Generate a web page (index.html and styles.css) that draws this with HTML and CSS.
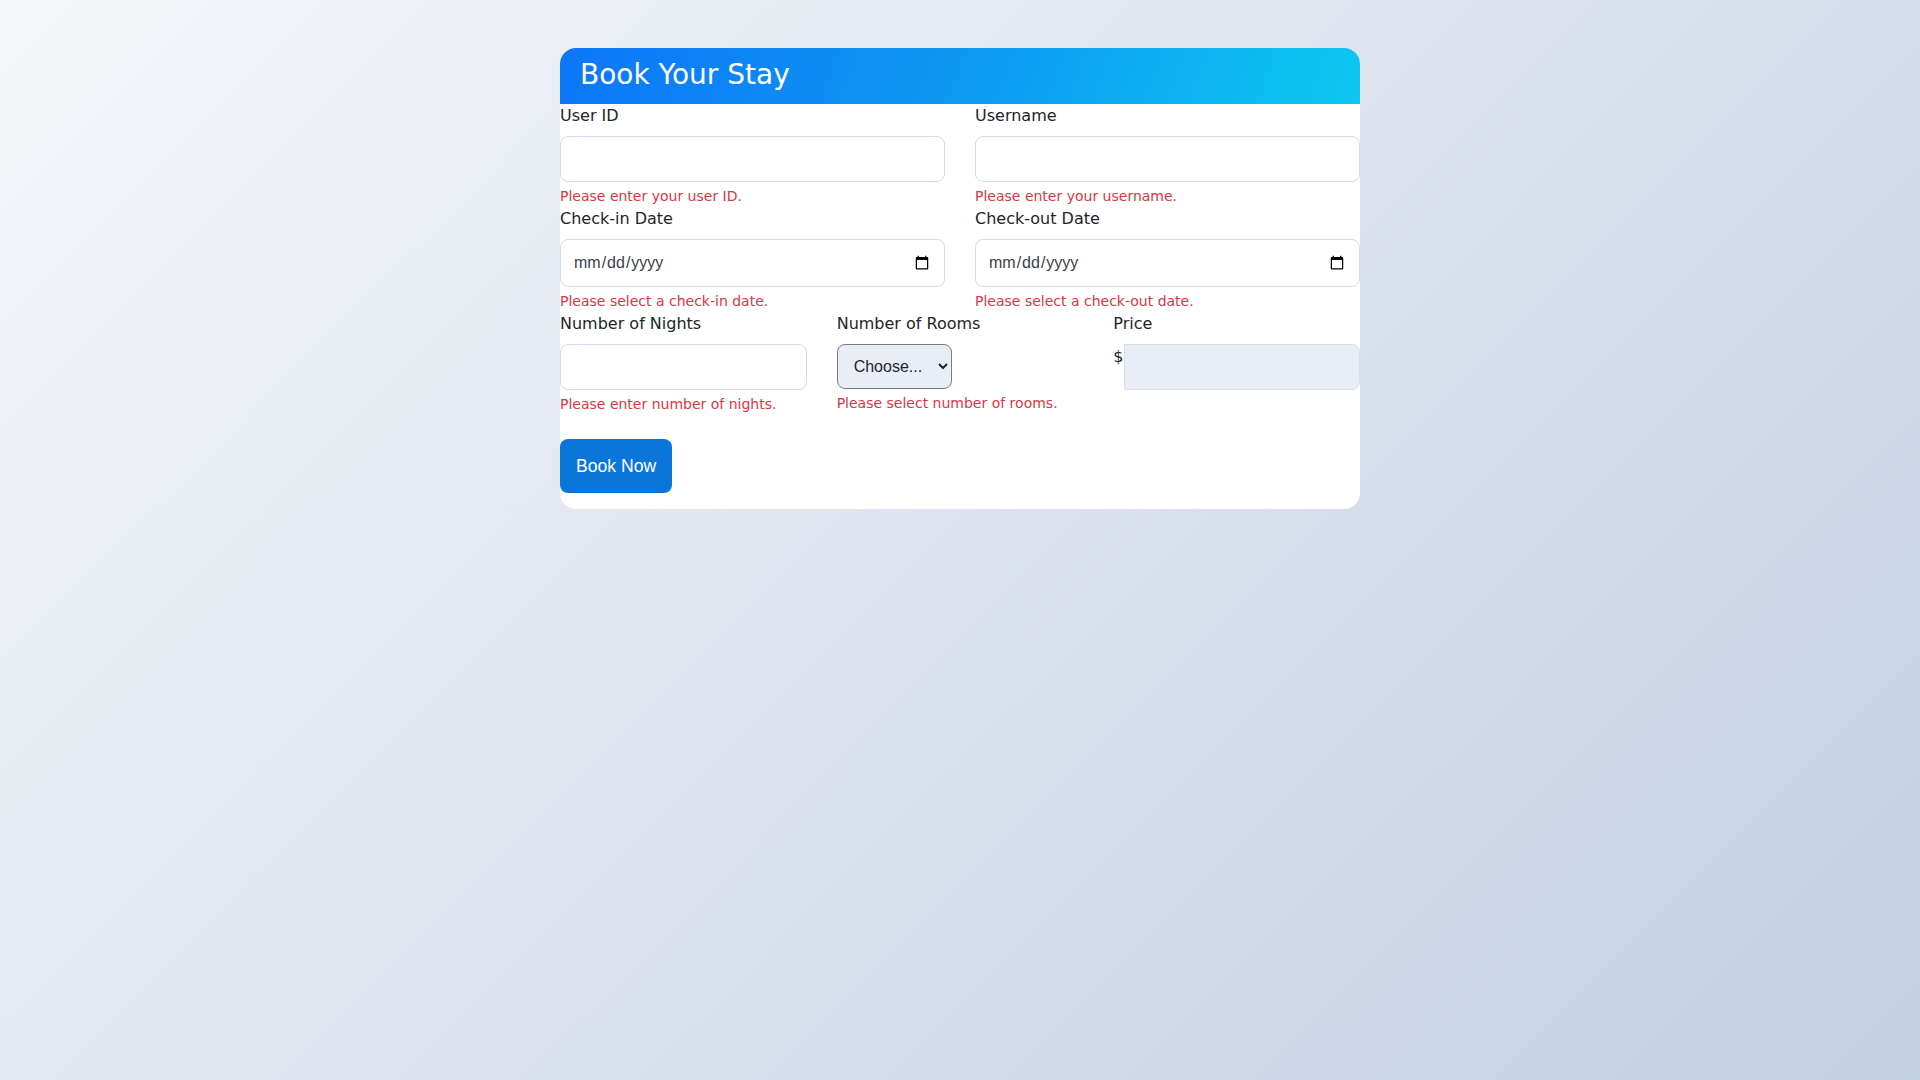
FILE: index.html
```html
<!DOCTYPE html>
<html lang="en">
<head>
<meta charset="utf-8">
<title>Book Your Stay</title>
<link rel="stylesheet" href="styles.css">
</head>
<body>
<main class="page">
  <section class="card">
    <header class="card-header">
      <h1 class="title">Book Your Stay</h1>
    </header>
    <form class="card-body">
      <div class="row two">
        <div class="field">
          <label class="form-label">User ID</label>
          <input class="form-control" type="text">
          <div class="invalid">Please enter your user ID.</div>
        </div>
        <div class="field">
          <label class="form-label">Username</label>
          <input class="form-control" type="text">
          <div class="invalid">Please enter your username.</div>
        </div>
      </div>
      <div class="row two">
        <div class="field">
          <label class="form-label">Check-in Date</label>
          <input class="form-control date" type="date">
          <div class="invalid">Please select a check-in date.</div>
        </div>
        <div class="field">
          <label class="form-label">Check-out Date</label>
          <input class="form-control date" type="date">
          <div class="invalid">Please select a check-out date.</div>
        </div>
      </div>
      <div class="row three">
        <div class="field">
          <label class="form-label">Number of Nights</label>
          <input class="form-control" type="text">
          <div class="invalid">Please enter number of nights.</div>
        </div>
        <div class="field">
          <label class="form-label">Number of Rooms</label>
          <div>
            <select class="form-select">
              <option>Choose...</option>
              <option>1</option>
              <option>2</option>
            </select>
          </div>
          <div class="invalid">Please select number of rooms.</div>
        </div>
        <div class="field">
          <label class="form-label">Price</label>
          <div class="input-group">
            <span class="currency">$</span>
            <input class="form-control price" type="text" readonly>
          </div>
        </div>
      </div>
      <div class="actions">
        <button class="btn" type="button">Book Now</button>
      </div>
    </form>
  </section>
</main>
</body>
</html>
```

FILE: styles.css
```css
html, body {
  margin: 0;
  padding: 0;
}
body {
  min-height: 100vh;
  background: linear-gradient(135deg, #f5f7fa 0%, #c3cfe2 100%);
  font-family: "DejaVu Sans", sans-serif;
  font-size: 16px;
  line-height: 1.5;
  color: #212529;
}
.page {
  padding-top: 48px;
}
.card {
  width: 800px;
  margin: 0 auto;
  background: #fff;
  border-radius: 16px;
  overflow: hidden;
}
.card-header {
  box-sizing: border-box;
  height: 56px;
  background: linear-gradient(110deg, #0d76f8 0%, #0d98f2 50%, #0dc8f0 100%);
  display: flex;
  align-items: center;
  padding: 0 20px 2px;
}
.title {
  margin: 0;
  font-size: 28px;
  font-weight: 400;
  line-height: 1.2;
  color: #fff;
}
.card-body {
  padding-bottom: 16px;
}
.row {
  display: grid;
  column-gap: 30px;
}
.row.two {
  grid-template-columns: 1fr 1fr;
}
.row.three {
  grid-template-columns: 1fr 1fr 1fr;
}
.field {
  display: flex;
  flex-direction: column;
}
.form-label {
  display: block;
  margin-bottom: 8px;
}
.form-control {
  box-sizing: border-box;
  width: 100%;
  height: 46px;
  padding: 0 12px;
  border: 1px solid #d3dbe9;
  border-radius: 8px;
  background: #fff;
  font-family: "Liberation Sans", Arial, sans-serif;
  font-size: 16px;
  color: #3a4047;
}
.form-control.date {
  height: 48px;
}
.invalid {
  margin-top: 4px;
  font-size: 14px;
  line-height: 21px;
  color: #dc3545;
}
.form-select {
  box-sizing: border-box;
  width: 115px;
  height: 45px;
  padding: 0 8px 0 12px;
  border: 1px solid #737d8c;
  border-radius: 8px;
  background: #e9edf5;
  font-family: "Liberation Sans", Arial, sans-serif;
  font-size: 16px;
  color: #212529;
}
.input-group {
  display: flex;
  align-items: flex-start;
}
.currency {
  line-height: 24px;
  padding-top: 1px;
}
.form-control.price {
  flex: 1;
  background: #e9edf6;
  border-color: #d6ddeb;
  border-radius: 0 8px 8px 0;
}
.actions {
  margin-top: 24px;
}
.btn {
  height: 54px;
  padding: 0 16px;
  border: 0;
  border-radius: 8px;
  background: #0b76da;
  color: #fff;
  font-family: "Liberation Sans", Arial, sans-serif;
  font-size: 17.6px;
}
```
